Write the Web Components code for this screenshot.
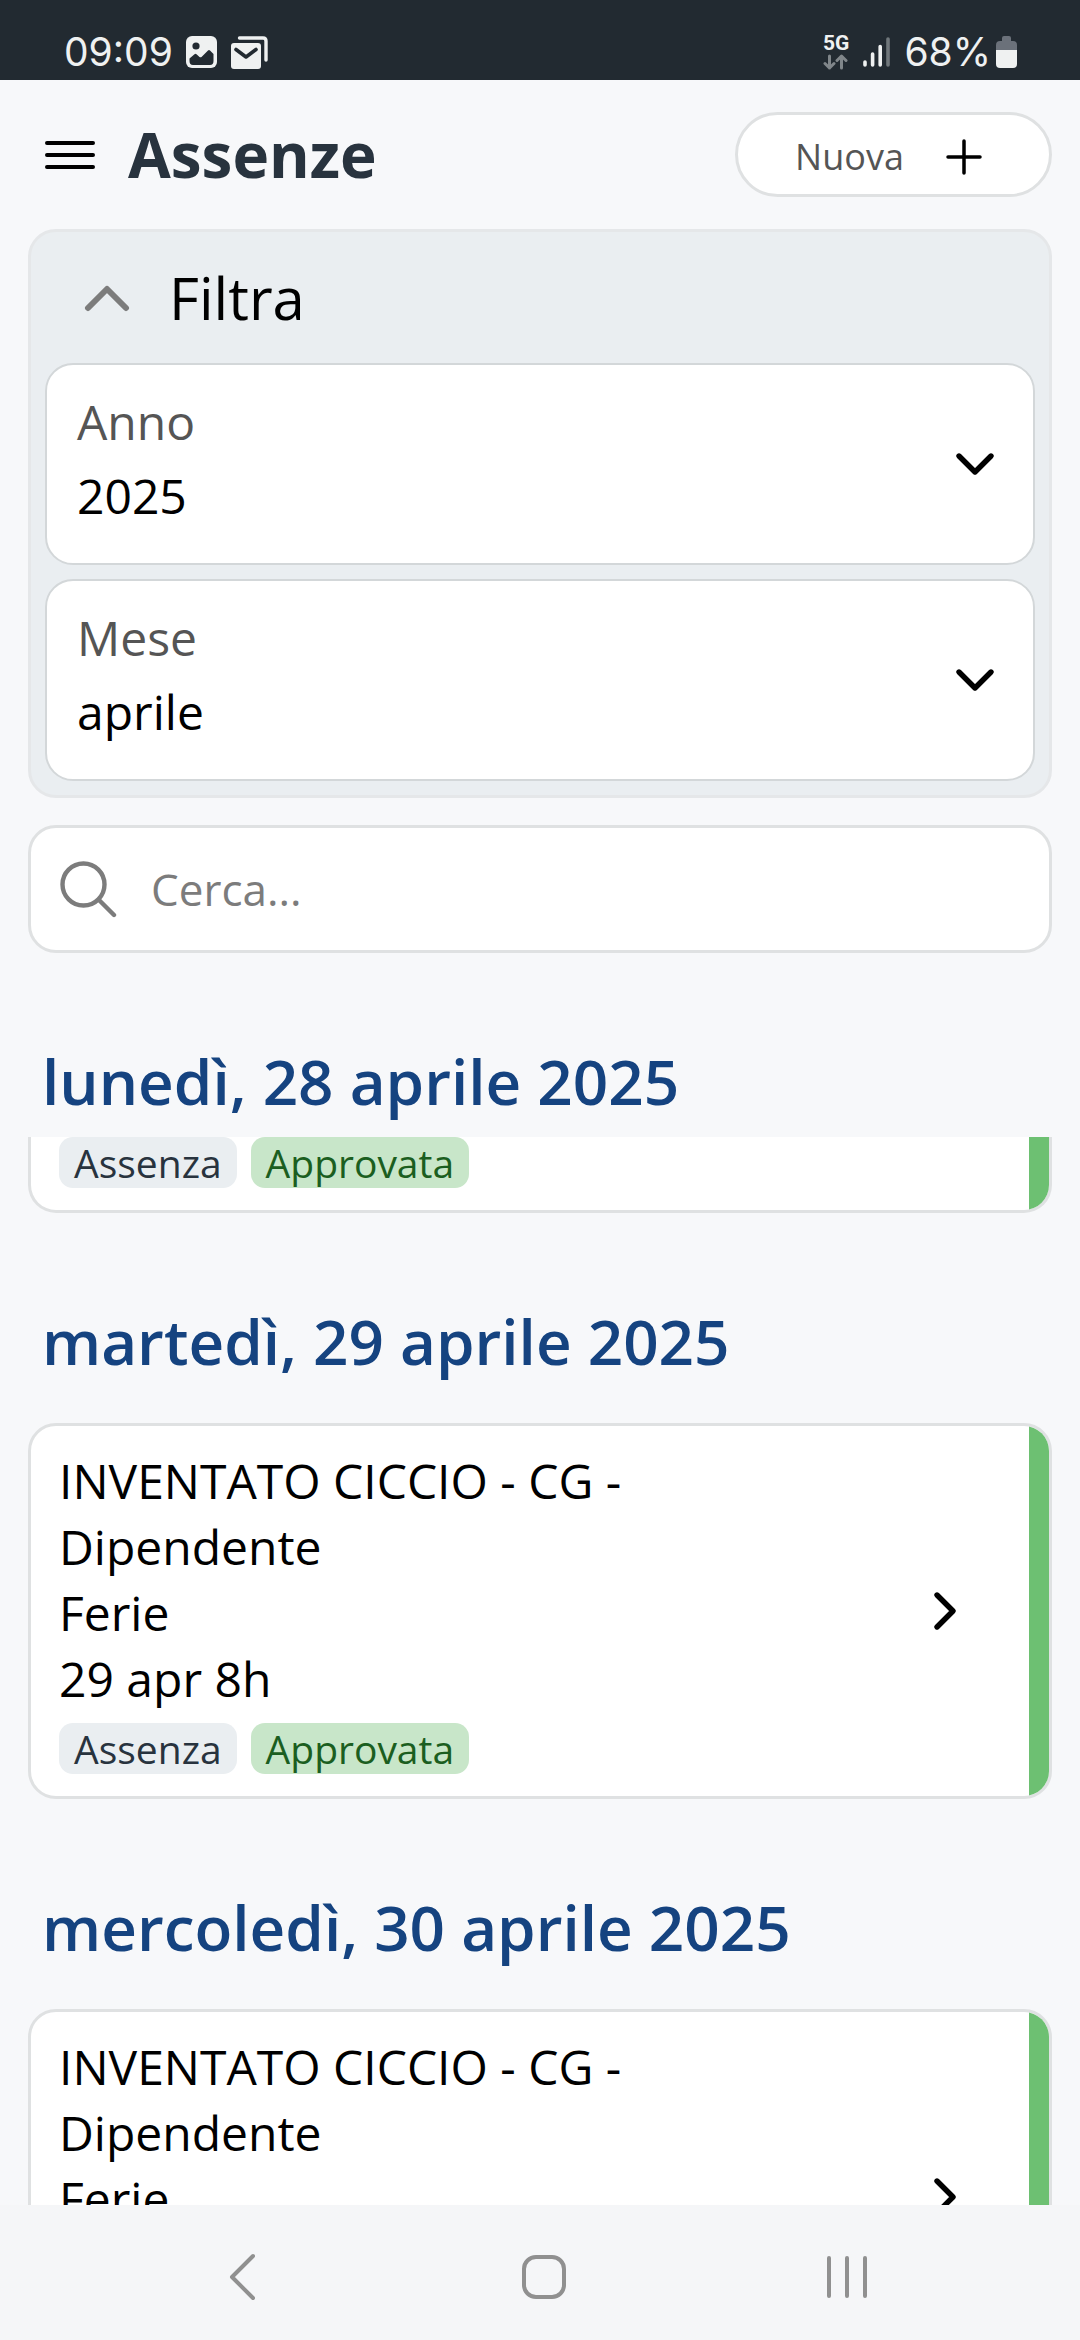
<!DOCTYPE html>
<html lang="it">
<head>
<meta charset="utf-8">
<meta name="viewport" content="width=device-width">
<title>Assenze</title>
<style>
  :root {
    --page: #f7f8fa;
    --line: #dfe1e2;
    --muted: #555555;
    --icon: #7c7c7c;
    --panel: #eaeef1;
    --green: #6dc072;
    --blue: #154380;
    --radius: 28px;
    --text-xs: 36px;
    --text-s: 39px;
    --text-m: 44px;
    --text-l: 48px;
    --text-xl: 58px;
    --text-title: 62px;
  }
  body {
    margin: 0;
    background: var(--page);
    color: #000;
    font-family: "Open Sans", "Noto Sans", sans-serif;
    font-size: var(--text-l);
  }
</style>
</head>
<body>
<absence-app></absence-app>

<script>
class BaseElement extends HTMLElement {
  constructor() {
    super();
    this.attachShadow({ mode: 'open' });
  }
  connectedCallback() {
    this.shadowRoot.innerHTML =
      '<style>*{box-sizing:border-box}svg{display:block;fill:none;stroke:currentColor;stroke-linecap:round;stroke-linejoin:round;flex:none}' +
      'button{font:inherit;color:inherit;background:none;border:0;padding:0;margin:0}</style>' + this.render();
  }
}

customElements.define('status-bar', class extends BaseElement {
  render() {
    return `
    <style>
      :host { display: flex; flex: none; align-items: center; justify-content: space-between; box-sizing: border-box;
        height: 80px; padding: 24px 63px 0 64px; background: #222a31; color: #eff1f1;
        font: 400 39px/56px Inter, Roboto, sans-serif; }
      div { display: flex; align-items: center; }
      .left { gap: 13px; }
      .right { gap: 14px; }
      .charge { gap: 5px; }
      .net { flex-direction: column; gap: 3px; font: 700 21px/16px Roboto, sans-serif; }
    </style>
    <div class="left">
      <span>09:09</span>
      <svg width="32" height="32" viewBox="0 0 32 32" style="stroke:none" aria-hidden="true">
        <rect width="31" height="32" rx="6" fill="#eff1f1"/>
        <circle cx="10" cy="10" r="3.6" fill="#222a31"/>
        <path d="M3.500 22.500l5-4.300q1-.8 2 0l3 2.700q1 .8 2 0l6.500-6.500q1-1 2 0l3.500 3.500v7q0 4-3.500 4h-17q-3.500 0-3.500-4z" fill="#222a31"/>
      </svg>
      <svg width="37" height="33" viewBox="0 0 37 33" aria-hidden="true">
        <rect x="0" y="7" width="30" height="26" rx="3" style="fill:#eff1f1;stroke:none"/>
        <path d="M5 13.500l10 7.500 10-7.500" stroke="#222a31" stroke-width="3.600"/>
        <path d="M8.500 2H32q3 0 3 3v19" stroke-width="3.400"/>
      </svg>
    </div>
    <div class="right">
      <div class="net"><span>5G</span>
        <svg width="26" height="16" viewBox="0 0 26 16" stroke-width="3" style="stroke:#80868a" aria-hidden="true">
          <path d="M6.500 2v12M2 9.500l4.500 4.500L11 9.500M18.500 14V2M14 6.500L18.500 2 23 6.500"/>
        </svg>
      </div>
      <svg width="27" height="30" viewBox="0 0 27 30" stroke-width="3.600" aria-hidden="true">
        <path d="M2 25v3M9.600 17v11M17.200 9.500V28"/><path d="M25 2v26" stroke="#70777b"/>
      </svg>
      <div class="charge"><span>68%</span>
        <svg width="21" height="32" viewBox="0 0 21 32" style="stroke:none" aria-hidden="true">
          <path d="M6 5V2q0-2 2-2h5q2 0 2 2v3h2q4 0 4 4v6H0V9q0-4 4-4z" fill="#6b717a"/>
          <path d="M0 14h21v14q0 4-4 4H4q-4 0-4-4z" fill="#eff1f1"/>
        </svg>
      </div>
    </div>`;
  }
});

customElements.define('page-header', class extends BaseElement {
  render() {
    return `
    <style>
      :host { display: flex; flex: none; align-items: center; padding: 32px 28px; box-sizing: border-box; }
      .menu { padding: 0 16px; }
      h1 { flex: 1; margin: 0; padding-left: 16px; color: #28333e; font-size: var(--text-title); font-weight: 700; line-height: 85px; }
      .new { display: flex; align-items: center; justify-content: center; gap: 42px; width: 317px; height: 85px; padding: 4px 10px 0 0;
        border: 3px solid var(--line); border-radius: 43px; background: #fff; }
      .new span { color: var(--muted); font-size: var(--text-xs); }
    </style>
    <button class="menu" type="button" aria-label="Menu">
      <svg width="52" height="32" viewBox="0 0 52 32" stroke-width="4"><path d="M3 4h46M3 16h46M3 28h46"/></svg>
    </button>
    <h1><slot></slot></h1>
    <button class="new" type="button"><span>Nuova</span>
      <svg width="36" height="36" viewBox="0 0 36 36" stroke-width="3.500"><path d="M18 2v32M2 18h32"/></svg>
    </button>`;
  }
});

customElements.define('filter-panel', class extends BaseElement {
  render() {
    return `
    <style>
      :host { display: flex; flex: none; flex-direction: column; gap: 14px; margin: 0 28px; padding: 0 14px 14px; box-sizing: border-box;
        border: 3px solid #e5e7e9; border-radius: var(--radius); background: var(--panel); }
      button { display: flex; align-items: center; gap: 38px; height: 131px; margin-bottom: -14px; padding-left: 38px; font-size: var(--text-xl); }
      svg { color: var(--icon); }
    </style>
    <button type="button" aria-expanded="true">
      <svg width="48" height="28" viewBox="0 0 48 28" stroke-width="6"><path d="M5 24L24 5l19 19"/></svg>
      <span>Filtra</span>
    </button>
    <slot></slot>`;
  }
});

customElements.define('filter-select', class extends BaseElement {
  render() {
    return `
    <style>
      :host { display: flex; align-items: center; box-sizing: border-box; height: 202px; padding: 0 38px 0 30px;
        border: 2px solid #d3d7d9; border-radius: var(--radius); background: #fff; }
      div { display: flex; flex: 1; flex-direction: column; padding-bottom: 10px; }
      label { color: var(--muted); font-weight: 500; line-height: 74px; }
      select { appearance: none; height: 74px; margin: 0; padding: 0; border: 0; background: none; color: #000;
        font: inherit; line-height: 74px; }
    </style>
    <div>
      <label for="field">${this.getAttribute('label')}</label>
      <select id="field"><option>${this.getAttribute('value')}</option></select>
    </div>
    <svg width="40" height="24" viewBox="0 0 40 24" stroke-width="5.400"><path d="M4 4l16 16L36 4"/></svg>`;
  }
});

customElements.define('search-box', class extends BaseElement {
  render() {
    return `
    <style>
      :host { display: flex; flex: none; align-items: center; gap: 34px; box-sizing: border-box; height: 128px; margin: 27px 28px 0; padding: 0 29px;
        border: 3px solid var(--line); border-radius: var(--radius); background: #fff; color: var(--icon); }
      input { flex: 1; min-width: 0; height: 80px; margin: 0; padding: 0; border: 0; background: none; font: inherit; font-size: var(--text-m); }
      input::placeholder { color: var(--icon); opacity: 1; }
    </style>
    <svg width="57" height="57" viewBox="0 0 57 57" stroke-width="4.400" aria-hidden="true"><circle cx="23.500" cy="23.500" r="21"/><path d="M39 39l15 15"/></svg>
    <input type="search" placeholder="Cerca..." aria-label="Cerca">`;
  }
});

customElements.define('day-group', class extends BaseElement {
  render() {
    return `
    <style>
      :host { display: block; }
      h2 { position: sticky; top: 0; z-index: 1; height: 184px; margin: 0; padding: 86px 42px 0;
        background: var(--page); color: var(--blue); font-size: var(--text-title); font-weight: 600; line-height: 84px; }
    </style>
    <h2>${this.getAttribute('day')}</h2>
    <slot></slot>`;
  }
});

customElements.define('status-tag', class extends BaseElement {
  render() {
    return `
    <style>
      :host { display: block; padding: 0 15px; border-radius: 14px; background: #eaeef1; color: #28333e;
        font-size: var(--text-s); line-height: 51px; }
      :host([approved]) { background: #c8e6c9; color: #1b5e20; }
    </style>
    <slot></slot>`;
  }
});

customElements.define('absence-card', class extends BaseElement {
  render() {
    const continued = this.hasAttribute('continued');
    const pending = this.hasAttribute('pending');
    return `
    <style>
      :host { display: flex; overflow: hidden; min-height: 376px; margin: 26px 28px 0; box-sizing: border-box;
        border: 3px solid var(--line); border-radius: var(--radius); background: #fff; }
      :host([continued]) { min-height: 0; margin-top: 0; border-top: 0; border-radius: 0 0 var(--radius) var(--radius); }
      .body { flex: 1; padding: 22px 0 22px 28px; }
      :host([continued]) .body { padding-top: 0; }
      p { margin: 0; line-height: 66px; }
      .tags { display: flex; gap: 14px; }
      p + .tags { margin-top: 11px; }
      button { display: flex; width: 168px; align-items: center; justify-content: center; }
      .mark { width: 20px; background: var(--green); }
    </style>
    <div class="body">
      ${continued ? '' : '<p>INVENTATO CICCIO - CG - Dipendente</p><p>Ferie</p>'}
      ${continued || pending ? '' : `<p>${this.getAttribute('when')}</p>`}
      ${pending ? '' : '<div class="tags"><status-tag>Assenza</status-tag><status-tag approved>Approvata</status-tag></div>'}
    </div>
    ${continued ? '' : `<button type="button" aria-label="Apri">
      <svg width="24" height="40" viewBox="0 0 24 40" stroke-width="5.400"><path d="M4 4l16 16L4 36"/></svg>
    </button>`}
    <div class="mark"></div>`;
  }
});

customElements.define('day-list', class extends BaseElement {
  render() {
    return `
    <style>
      :host { display: block; flex: 1; min-height: 0; overflow-y: auto; scrollbar-width: none; }
    </style>
    <slot></slot>`;
  }
});

customElements.define('system-nav', class extends BaseElement {
  render() {
    return `
    <style>
      :host { display: flex; flex: none; box-sizing: border-box; height: 135px; padding: 9px 82px 0 91px; background: #f5f6f8; color: #909090; }
      button { display: flex; flex: 1; align-items: center; justify-content: center; }
    </style>
    <button type="button" aria-label="Indietro"><svg width="28" height="48" viewBox="0 0 28 48" stroke-width="4"><path d="M25 3L4 24l21 21"/></svg></button>
    <button type="button" aria-label="Home"><svg width="46" height="46" viewBox="0 0 46 46" stroke-width="4"><rect x="3" y="3" width="40" height="40" rx="12"/></svg></button>
    <button type="button" aria-label="Recenti"><svg width="42" height="44" viewBox="0 0 42 44" stroke-width="4"><path d="M3 3v38M21 3v38M39 3v38"/></svg></button>`;
  }
});

customElements.define('absence-app', class extends BaseElement {
  render() {
    return `
    <style>:host { display: flex; flex-direction: column; height: 100vh; }</style>
    <status-bar></status-bar>
    <page-header>Assenze</page-header>
    <filter-panel>
      <filter-select label="Anno" value="2025"></filter-select>
      <filter-select label="Mese" value="aprile"></filter-select>
    </filter-panel>
    <search-box></search-box>
    <day-list>
      <day-group day="lunedì, 28 aprile 2025"><absence-card continued></absence-card></day-group>
      <day-group day="martedì, 29 aprile 2025"><absence-card when="29 apr 8h"></absence-card></day-group>
      <day-group day="mercoledì, 30 aprile 2025"><absence-card pending></absence-card></day-group>
    </day-list>
    <system-nav></system-nav>`;
  }
});
</script>
</body>
</html>
